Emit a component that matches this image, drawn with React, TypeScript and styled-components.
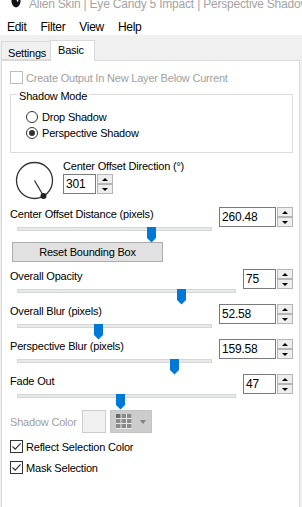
import React from 'react'
import styled, {createGlobalStyle} from 'styled-components'

const GlobalStyle = createGlobalStyle`
  html, body {
    margin: 0;
    padding: 0;
    background: #ffffff;
  }
`

type SliderData = {
  label: string
  value: string
  pos: number
  wide: boolean
}

const sliders: SliderData[] = [
  {label: 'Overall Opacity', value: '75', pos: 0.76, wide: false},
  {label: 'Overall Blur (pixels)', value: '52.58', pos: 0.415, wide: true},
  {label: 'Perspective Blur (pixels)', value: '159.58', pos: 0.82, wide: true},
  {label: 'Fade Out', value: '47', pos: 0.47, wide: false},
]

const CheckMark = () => (
  <svg width="11" height="11" viewBox="0 0 11 11">
    <path d="M1.5 5.5 L4.2 8.2 L9.6 2.4" fill="none" stroke="#333" strokeWidth="1.2" />
  </svg>
)

const Spin = ({value, wide}: {value: string; wide: boolean}) => (
  <SpinBox>
    <SpinText $wide={wide}>{value}</SpinText>
    <SpinButtons>
      <SpinButton><ArrowUp /></SpinButton>
      <SpinButton><ArrowDown /></SpinButton>
    </SpinButtons>
  </SpinBox>
)

const Slider = ({label, value, pos, wide}: SliderData) => (
  <SliderRow>
    <div>
      <Label>{label}</Label>
      <SliderArea>
        <Track />
        <Thumb style={{left: `calc(${pos} * (100% - 16px) + 7px)`}}>
          <svg width="9" height="16" viewBox="0 0 9 16">
            <path d="M0 0 H9 V11 L4.5 15.5 L0 11 Z" fill="#0078d7" />
          </svg>
        </Thumb>
      </SliderArea>
    </div>
    <Spin value={value} wide={wide} />
  </SliderRow>
)

const App = () => {
  return (
    <Window>
      <GlobalStyle />
      <TitleBar>
        <AppIcon width="10" height="8" viewBox="0 0 10 8">
          <path d="M0.5 0 H9.5 C9.8 3 8.5 6.8 5 7.5 C1.5 6.8 0.2 3 0.5 0 Z" fill="#111" />
          <path d="M5.5 0 L7.5 0 L6.8 2.2 Z" fill="#fff" />
        </AppIcon>
        <TitleText>Alien Skin | Eye Candy 5 Impact | Perspective Shadow</TitleText>
      </TitleBar>
      <MenuBar>
        <span>Edit</span>
        <span>Filter</span>
        <span>View</span>
        <span>Help</span>
      </MenuBar>
      <TabStrip>
        <Tab>Settings</Tab>
        <Tab $active>Basic</Tab>
      </TabStrip>
      <Panel>
        <CheckRow $disabled>
          <CheckBox $disabled />
          <span>Create Output In New Layer Below Current</span>
        </CheckRow>

        <Group>
          <Legend>Shadow Mode</Legend>
          <RadioList>
            <RadioRow>
              <Radio />
              <span>Drop Shadow</span>
            </RadioRow>
            <RadioRow>
              <Radio $checked />
              <span>Perspective Shadow</span>
            </RadioRow>
          </RadioList>
        </Group>

        <DialRow>
          <svg width="40" height="40" viewBox="0 0 40 40">
            <circle cx="19.5" cy="19.5" r="18" fill="none" stroke="#333" strokeWidth="1.3" />
            <line x1="19.5" y1="19.5" x2="28.5" y2="35" stroke="#333" strokeWidth="1.3" />
            <circle cx="28.5" cy="35" r="3" fill="#222" />
          </svg>
          <div>
            <Label>Center Offset Direction (°)</Label>
            <Spin value="301" wide={false} />
          </div>
        </DialRow>

        <Slider label="Center Offset Distance (pixels)" value="260.48" pos={0.7} wide />

        <ResetButton>Reset Bounding Box</ResetButton>

        <SliderStack>
          {sliders.map((s) => (
            <Slider key={s.label} {...s} />
          ))}
        </SliderStack>

        <ColorRow>
          <DisabledLabel>Shadow Color</DisabledLabel>
          <Swatch />
          <PaletteButton>
            <svg width="16" height="15" viewBox="0 0 16 15">
              <rect x="0" y="0" width="16" height="15" fill="#e8e8e8" />
              {[0, 1, 2].map((r) =>
                [0, 1, 2].map((c) => (
                  <rect key={`${r}${c}`} x={c * 5.5} y={r * 5} width="4.5" height="4" fill={r === 0 && c === 0 ? '#6a6a6a' : '#8a8a8a'} />
                ))
              )}
            </svg>
            <DropArrow />
          </PaletteButton>
        </ColorRow>

        <CheckList>
          <CheckRow>
            <CheckBox><CheckMark /></CheckBox>
            <span>Reflect Selection Color</span>
          </CheckRow>
          <CheckRow>
            <CheckBox><CheckMark /></CheckBox>
            <span>Mask Selection</span>
          </CheckRow>
        </CheckList>
      </Panel>
    </Window>
  )
}

export default App

const Window = styled.div`
    width: 302px;
    height: 507px;
    display: flex;
    flex-direction: column;
    overflow: hidden;
    background: #f0f0f0;
    font-family: "Liberation Sans", Arial, sans-serif;
    font-size: 11px;
    letter-spacing: -0.2px;
    color: #000;
`
const TitleBar = styled.div`
    height: 17px;
    display: flex;
    align-items: flex-start;
    background: #ffffff;
    overflow: hidden;
`
const AppIcon = styled.svg`
    margin-left: 11px;
    flex-shrink: 0;
`
const TitleText = styled.div`
    margin-left: 8px;
    margin-top: -3px;
    font-size: 12px;
    line-height: 14px;
    color: #a3a3a3;
    white-space: nowrap;
`
const MenuBar = styled.div`
    height: 18px;
    box-sizing: border-box;
    padding: 2px 0 0 7px;
    display: flex;
    gap: 14px;
    font-size: 12px;
    line-height: 16px;
    letter-spacing: -0.3px;
    background: #ffffff;
`
const TabStrip = styled.div`
    height: 25px;
    display: flex;
    align-items: flex-end;
    padding-left: 1px;
`
const Tab = styled.div<{$active?: boolean}>`
    box-sizing: border-box;
    height: ${(p) => (p.$active ? '21px' : '19px')};
    width: ${(p) => (p.$active ? '45px' : '50px')};
    margin-bottom: ${(p) => (p.$active ? '-1px' : '0')};
    padding: ${(p) => (p.$active ? '2px 0 0 7px' : '4px 0 0 6px')};
    margin-left: ${(p) => (p.$active ? '-1px' : '0')};
    line-height: 14px;
    border: 1px solid #d9d9d9;
    border-bottom: ${(p) => (p.$active ? 'none' : '1px solid #d9d9d9')};
    background: ${(p) => (p.$active ? '#ffffff' : '#f0f0f0')};
    position: relative;
    z-index: ${(p) => (p.$active ? 1 : 0)};
`
const Panel = styled.div`
    flex: 1;
    margin: 0 2px -3px 1px;
    background: #ffffff;
    border: 1px solid #d9d9d9;
    padding: 10px 6px 0 8px;
    display: flex;
    flex-direction: column;
    align-items: stretch;
`
const CheckRow = styled.div<{$disabled?: boolean}>`
    height: 13px;
    display: flex;
    align-items: center;
    gap: 3px;
    line-height: 14px;
    color: ${(p) => (p.$disabled ? '#a0a0a0' : '#000')};
    white-space: nowrap;
`
const CheckBox = styled.div<{$disabled?: boolean}>`
    box-sizing: border-box;
    width: 13px;
    height: 13px;
    border: 1px solid ${(p) => (p.$disabled ? '#bcbcbc' : '#333')};
    background: #fff;
    display: flex;
    align-items: center;
    justify-content: center;
    flex-shrink: 0;
`
const Group = styled.fieldset`
    margin: 1px 0 0 0;
    padding: 0 0 11px 6px;
    border: 1px solid #dcdcdc;
    min-width: 0;
`
const Legend = styled.legend`
    padding: 4px 2px 0;
    line-height: 14px;
`
const RadioList = styled.div`
    display: flex;
    flex-direction: column;
    padding: 6px 0 0 9px;
`
const RadioRow = styled.div`
    height: 16px;
    display: flex;
    align-items: center;
    gap: 4px;
`
const Radio = styled.div<{$checked?: boolean}>`
    box-sizing: border-box;
    width: 12px;
    height: 12px;
    border-radius: 50%;
    border: 1px solid #333;
    background: #fff;
    display: flex;
    align-items: center;
    justify-content: center;
    &::after {
        content: '';
        display: ${(p) => (p.$checked ? 'block' : 'none')};
        width: 6px;
        height: 6px;
        border-radius: 50%;
        background: #333;
    }
`
const DialRow = styled.div`
    margin-top: 6px;
    height: 42px;
    display: flex;
    gap: 8px;
    & > svg {
        margin: 2px 0 0 5px;
    }
`
const Label = styled.div`
    line-height: 14px;
    white-space: nowrap;
    margin-bottom: 1px;
`
const SpinBox = styled.div`
    display: flex;
    height: 20px;
`
const SpinText = styled.div<{$wide: boolean}>`
    box-sizing: border-box;
    width: ${(p) => (p.$wide ? '57px' : '33px')};
    height: 20px;
    border: 1px solid #7a7a7a;
    background: #fff;
    padding-left: 2px;
    font-size: 12px;
    line-height: 18px;
`
const SpinButtons = styled.div`
    width: 16px;
    margin-left: 1px;
    display: flex;
    flex-direction: column;
`
const SpinButton = styled.div`
    box-sizing: border-box;
    height: 10px;
    border: 1px solid #b5b5b5;
    background: #eeeeee;
    display: flex;
    align-items: center;
    justify-content: center;
`
const ArrowUp = styled.div`
    width: 0;
    height: 0;
    border-left: 3px solid transparent;
    border-right: 3px solid transparent;
    border-bottom: 3px solid #000;
`
const ArrowDown = styled.div`
    width: 0;
    height: 0;
    border-left: 3px solid transparent;
    border-right: 3px solid transparent;
    border-top: 3px solid #000;
`
const SliderRow = styled.div`
    display: grid;
    grid-template-columns: 1fr auto;
    column-gap: 7px;
    margin-top: 6px;
    height: 31px;
`
const SliderArea = styled.div`
    position: relative;
    height: 16px;
    padding-left: 7px;
`
const Track = styled.div`
    box-sizing: border-box;
    margin-top: 6px;
    height: 4px;
    background: #e7eaea;
    border: 1px solid #d6d6d6;
`
const Thumb = styled.div`
    position: absolute;
    top: 0;
    width: 9px;
    height: 16px;
    line-height: 0;
`
const ResetButton = styled.div`
    box-sizing: border-box;
    width: 151px;
    height: 20px;
    margin: 4px 0 0 2px;
    background: #e1e1e1;
    border: 1px solid #adadad;
    display: flex;
    align-items: center;
    justify-content: center;
`
const SliderStack = styled.div`
    display: flex;
    flex-direction: column;
    margin-top: 1px;
    & > div {
        margin-top: 4px;
    }
    & > div:first-child {
        margin-top: 6px;
    }
`
const ColorRow = styled.div`
    margin-top: 5px;
    height: 23px;
    display: flex;
    align-items: center;
`
const DisabledLabel = styled.span`
    color: #a0a0a0;
    margin-right: 5px;
`
const Swatch = styled.div`
    box-sizing: border-box;
    width: 24px;
    height: 23px;
    background: #f0f0f0;
    border: 1px solid #cccccc;
`
const PaletteButton = styled.div`
    box-sizing: border-box;
    width: 42px;
    height: 23px;
    margin-left: 4px;
    padding-left: 5px;
    background: #cccccc;
    border: 1px solid #c4c4c4;
    display: flex;
    align-items: center;
`
const DropArrow = styled.div`
    margin-left: 8px;
    width: 0;
    height: 0;
    border-left: 3.5px solid transparent;
    border-right: 3.5px solid transparent;
    border-top: 4px solid #7f7f7f;
`
const CheckList = styled.div`
    margin-top: 7px;
    display: flex;
    flex-direction: column;
    gap: 8px;
`
